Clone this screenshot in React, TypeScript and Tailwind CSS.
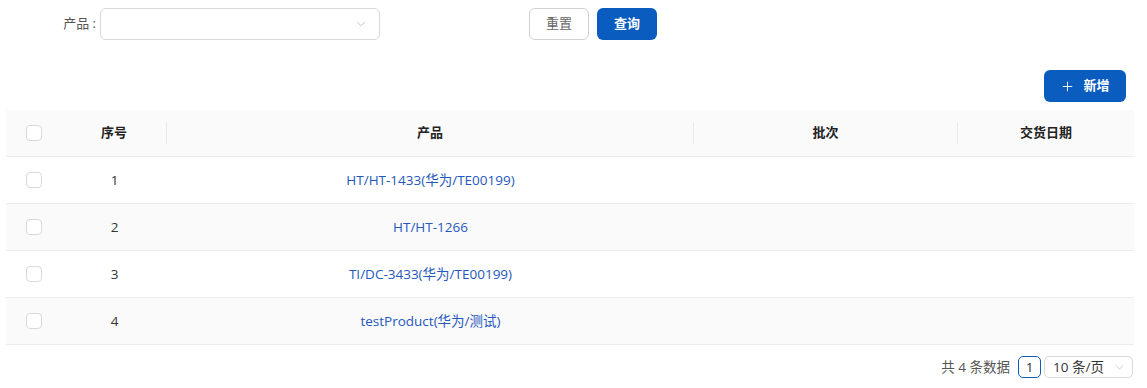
import { ChevronDown, Plus } from 'lucide-react';

const rows = [
    { no: 1, product: 'HT/HT-1433(华为/TE00199)' },
    { no: 2, product: 'HT/HT-1266' },
    { no: 3, product: 'TI/DC-3433(华为/TE00199)' },
    { no: 4, product: 'testProduct(华为/测试)' },
];

function Checkbox() {
    return <span className="block w-[16px] h-[16px] rounded-[4px] border border-[#d9d9d9] bg-white" />;
}

export default function App() {
    return (
        <div
            className="w-[1147px] h-[388px] bg-white pl-[6px] pr-[13px] text-[13.5px] text-[#333]"
            style={{ fontFamily: '"Open Sans", "Noto Sans CJK SC", sans-serif' }}
        >
            {/* Search bar */}
            <div className="flex items-center h-[48px]">
                <div className="w-[94px] text-right pr-[4px] text-[13px] text-[#555]">产品 :</div>
                <div className="w-[280px] h-[32px] border border-[#d9d9d9] rounded-[6px] flex items-center justify-end pr-[11px] text-[#bbb]">
                    <ChevronDown className="w-[14px] h-[14px]" strokeWidth={1.5} />
                </div>
                <button className="ml-[149px] w-[60px] h-[32px] rounded-[6px] border border-[#d0d0d0] text-[#666] text-[13px]">
                    重置
                </button>
                <button className="ml-[8px] w-[60px] h-[32px] rounded-[6px] bg-[#0a5cbf] text-white text-[13px] font-bold">
                    查询
                </button>
            </div>

            {/* Toolbar */}
            <div className="flex justify-end pr-[8px] mt-[22px]">
                <button className="flex items-center gap-[8px] h-[32px] w-[82px] justify-center rounded-[6px] bg-[#0a5cbf] text-white text-[13px] font-bold">
                    <Plus className="w-[15px] h-[15px]" strokeWidth={1.5} />
                    新增
                </button>
            </div>

            {/* Table */}
            <div className="mt-[8px]">
                <div className="flex h-[47px] bg-[#fafafa] border-b border-[#ececec] items-center font-bold text-[#222] text-[13px]">
                    <div className="w-[56px] flex justify-center">
                        <Checkbox />
                    </div>
                    <div className="w-[105px] h-[22px] flex items-center justify-center border-r border-[#eaeaea]">序号</div>
                    <div className="w-[527px] h-[22px] flex items-center justify-center border-r border-[#eaeaea]">产品</div>
                    <div className="w-[264px] h-[22px] flex items-center justify-center border-r border-[#eaeaea]">批次</div>
                    <div className="flex-1 text-center">交货日期</div>
                </div>
                {rows.map((r, i) => (
                    <div
                        key={r.no}
                        className={`flex h-[47px] items-center border-b border-[#ececec] ${i % 2 === 1 ? 'bg-[#fafafa]' : 'bg-white'}`}
                    >
                        <div className="w-[56px] flex justify-center">
                            <Checkbox />
                        </div>
                        <div className="w-[105px] text-center text-[#333]">{r.no}</div>
                        <div className="w-[527px] text-center text-[#2558bd]">{r.product}</div>
                        <div className="w-[264px]" />
                        <div className="flex-1" />
                    </div>
                ))}
            </div>

            {/* Pagination */}
            <div className="flex justify-end items-center mt-[11px] pr-[1px]">
                <span className="text-[#555] mr-[8px]">共 4 条数据</span>
                <span className="w-[23px] h-[22px] rounded-[5px] border border-[#0a5cbf] flex items-center justify-center text-[#333]">
                    1
                </span>
                <div className="ml-[3px] w-[89px] h-[22px] rounded-[5px] border border-[#d9d9d9] flex items-center justify-between pl-[8px] pr-[6px] text-[#333]">
                    <span>10 条/页</span>
                    <ChevronDown className="w-[13px] h-[13px] text-[#bbb]" strokeWidth={1.5} />
                </div>
            </div>
        </div>
    );
}
